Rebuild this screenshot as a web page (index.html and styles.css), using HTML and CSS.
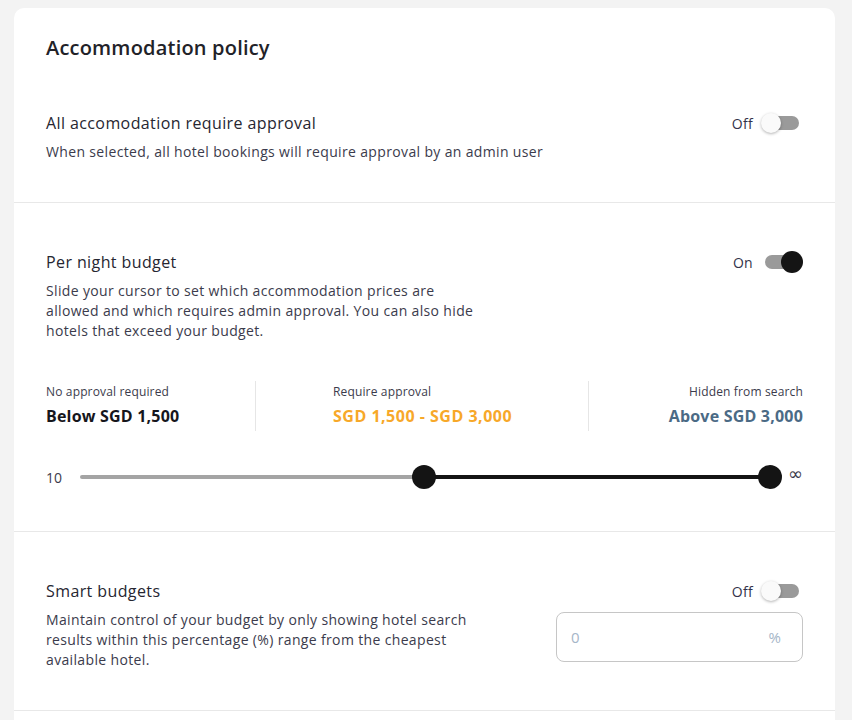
FILE: index.html
```html
<!DOCTYPE html>
<html lang="en">
<head>
<meta charset="utf-8">
<title>Accommodation policy</title>
<link rel="stylesheet" href="styles.css">
</head>
<body>
<div class="card">
  <div class="card-header">
    <h1 class="card-title">Accommodation policy</h1>
  </div>

  <section class="section section-first">
    <div class="row-head">
      <h2 class="sec-title">All accomodation require approval</h2>
      <div class="toggle-wrap">
        <span class="toggle-label">Off</span>
        <span class="toggle"><span class="knob"></span></span>
      </div>
    </div>
    <p class="sec-desc">When selected, all hotel bookings will require approval by an admin user</p>
  </section>

  <section class="section section-budget">
    <div class="row-head">
      <h2 class="sec-title">Per night budget</h2>
      <div class="toggle-wrap">
        <span class="toggle-label">On</span>
        <span class="toggle on"><span class="knob"></span></span>
      </div>
    </div>
    <p class="sec-desc">Slide your cursor to set which accommodation prices are<br>allowed and which requires admin approval. You can also hide<br>hotels that exceed your budget.</p>

    <div class="stats">
      <div class="stat stat-1">
        <div class="stat-label">No approval required</div>
        <div class="stat-value">Below SGD 1,500</div>
      </div>
      <div class="stat stat-2">
        <div class="stat-label">Require approval</div>
        <div class="stat-value orange">SGD 1,500 - SGD 3,000</div>
      </div>
      <div class="stat stat-3">
        <div class="stat-label">Hidden from search</div>
        <div class="stat-value slate">Above SGD 3,000</div>
      </div>
    </div>

    <div class="slider-row">
      <span class="slider-min">10</span>
      <div class="slider">
        <div class="track">
          <div class="track-fill" style="left: 49.85%;"></div>
        </div>
        <span class="thumb thumb-a" style="left: 332px;"></span>
        <span class="thumb thumb-b"></span>
      </div>
      <span class="slider-max">∞</span>
    </div>
  </section>

  <section class="section section-smart">
    <div class="row-head">
      <h2 class="sec-title">Smart budgets</h2>
      <div class="toggle-wrap">
        <span class="toggle-label">Off</span>
        <span class="toggle"><span class="knob"></span></span>
      </div>
    </div>
    <div class="smart-body">
      <p class="sec-desc">Maintain control of your budget by only showing hotel search<br>results within this percentage (%) range from the cheapest<br>available hotel.</p>
      <div class="pct-input">
        <span class="pct-value">0</span>
        <span class="pct-unit">%</span>
      </div>
    </div>
  </section>

  <section class="section section-empty"></section>
</div>
</body>
</html>
```

FILE: styles.css
```css
* { box-sizing: border-box; }

html, body {
  margin: 0;
  padding: 0;
}

body {
  background: #f3f3f3;
  font-family: "Open Sans", "DejaVu Sans", sans-serif;
  color: #262631;
  padding: 8px 17px 0 14px;
  height: 720px;
  overflow: hidden;
}

.card {
  background: #ffffff;
  border-radius: 10px 10px 0 0;
  min-height: 760px;
}

.card-header {
  padding: 28px 32px 4px;
}

.card-title {
  margin: 0;
  font-size: 20px;
  line-height: 24px;
  font-weight: 600;
  letter-spacing: 0.2px;
  color: #222228;
}

.section {
  padding: 48px 32px 40px;
  border-bottom: 1px solid #e8e8e8;
}

.section-budget {
  padding-bottom: 42px;
}

.section-empty {
  border-bottom: none;
}

.row-head {
  display: flex;
  align-items: center;
  justify-content: space-between;
  height: 22px;
}

.sec-title {
  margin: 0;
  font-size: 16px;
  line-height: 22px;
  font-weight: 500;
  letter-spacing: 0.4px;
  color: #262631;
}

.sec-desc {
  margin: 8px 0 0;
  font-size: 14px;
  line-height: 20px;
  letter-spacing: 0.35px;
  color: #3b3b4c;
}

.toggle-wrap {
  display: flex;
  align-items: center;
  gap: 8px;
}

.toggle-label {
  font-size: 14px;
  letter-spacing: 0.3px;
  color: #33334a;
}

.toggle {
  position: relative;
  display: inline-block;
  width: 42px;
  height: 22px;
}

.toggle::before {
  content: "";
  position: absolute;
  left: 4px;
  right: 4px;
  top: 4px;
  height: 14px;
  border-radius: 7px;
  background: #9a9a9a;
}

.knob {
  position: absolute;
  top: 1px;
  left: 0;
  width: 20px;
  height: 20px;
  border-radius: 50%;
  background: #fafafa;
  box-shadow: 0 1px 3px rgba(0, 0, 0, 0.3);
}

.toggle.on .knob {
  left: auto;
  right: 0;
  top: 0;
  width: 22px;
  height: 22px;
  background: #141414;
  box-shadow: none;
}

.stats {
  display: flex;
  margin-top: 40px;
  height: 50px;
}

.stat {
  padding-top: 3px;
}

.stat-1 {
  width: 210px;
  border-right: 1px solid #e6e6e6;
}

.stat-2 {
  width: 333px;
  padding-left: 77px;
  border-right: 1px solid #e6e6e6;
}

.stat-3 {
  flex: 1;
  text-align: right;
}

.stat-label {
  font-size: 12px;
  line-height: 16px;
  letter-spacing: 0.15px;
  color: #3b3b4c;
}

.stat-value {
  margin-top: 6px;
  font-size: 16px;
  line-height: 20px;
  font-weight: 700;
  letter-spacing: 0.2px;
  color: #16161c;
}

.stat-value.orange { color: #f7a829; letter-spacing: 0.5px; }
.stat-value.slate { color: #4b6a85; }

.slider-row {
  display: flex;
  align-items: center;
  margin-top: 34px;
  height: 24px;
}

.slider-min {
  width: 34px;
  flex-shrink: 0;
  font-size: 14px;
  color: #3b3b4c;
}

.slider {
  position: relative;
  flex: 0 0 702px;
  height: 24px;
}

.track {
  position: absolute;
  left: 0;
  right: 12px;
  top: 10px;
  height: 4px;
  background: #a4a4a4;
  border-radius: 2px;
}

.track-fill {
  position: absolute;
  top: 0;
  right: 0;
  bottom: 0;
  background: #141414;
}

.thumb {
  position: absolute;
  top: 0;
  width: 24px;
  height: 24px;
  border-radius: 50%;
  background: #141414;
}

.thumb-b {
  right: 0;
}

.slider-max {
  margin-left: 6px;
  font-family: "DejaVu Sans", sans-serif;
  font-size: 18px;
  line-height: 18px;
  color: #3b3b4c;
  position: relative;
  top: -3px;
  white-space: nowrap;
}

.smart-body {
  display: flex;
  justify-content: space-between;
  align-items: flex-start;
}

.pct-input {
  margin-top: 10px;
  width: 247px;
  height: 50px;
  border: 1px solid #c6c6c6;
  border-radius: 8px;
  display: flex;
  align-items: center;
  justify-content: space-between;
  padding: 0 21px 0 14px;
  font-size: 15px;
  color: #a6b6c8;
}
```
